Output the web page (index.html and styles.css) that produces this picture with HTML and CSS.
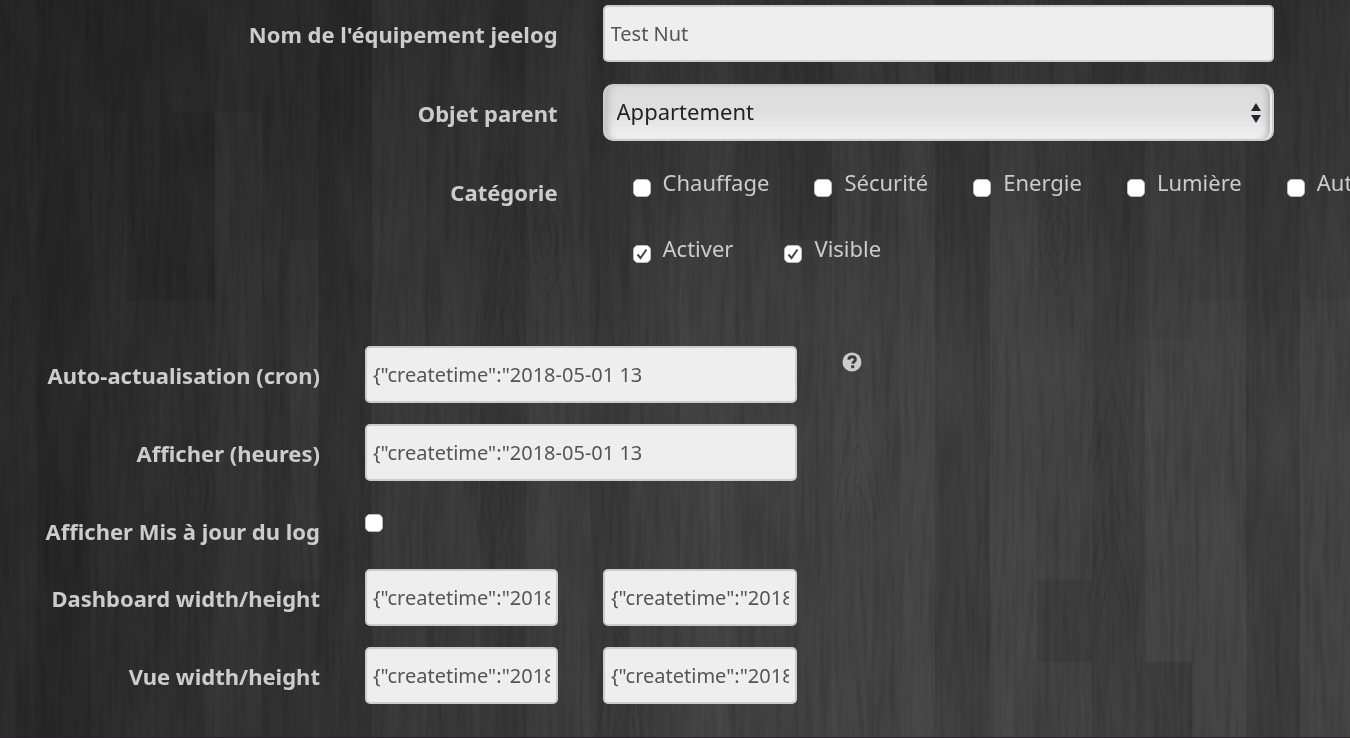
FILE: index.html
```html
<!DOCTYPE html>
<html lang="fr">
<head>
<meta charset="utf-8">
<meta name="viewport" content="width=device-width, initial-scale=1">
<title>Équipement jeelog</title>
<link rel="stylesheet" href="styles.css">
</head>
<body>
<svg class="wood" viewBox="0 0 1350 738" preserveAspectRatio="none" aria-hidden="true">
  <defs>
    <linearGradient id="shade" x1="0" y1="0" x2="1" y2="0">
      <stop offset="0" stop-color="#2a2a2a"/>
      <stop offset=".2" stop-color="#313131"/>
      <stop offset=".4" stop-color="#3d3d3d"/>
      <stop offset=".7" stop-color="#434343"/>
      <stop offset="1" stop-color="#414141"/>
    </linearGradient>
    <linearGradient id="top" x1="0" y1="0" x2="0" y2="1">
      <stop offset="0" stop-color="#222" stop-opacity=".5"/>
      <stop offset=".25" stop-color="#222" stop-opacity=".28"/>
      <stop offset=".5" stop-color="#222" stop-opacity="0"/>
    </linearGradient>
    <filter id="grain" x="0" y="0" width="100%" height="100%">
      <feTurbulence type="fractalNoise" baseFrequency=".2 .012" numOctaves="4" seed="8"/>
      <feColorMatrix values="0 0 0 0 0  0 0 0 0 0  0 0 0 0 0  1.6 0 0 0 -.6"/>
    </filter>
    <filter id="knots" x="0" y="0" width="100%" height="100%">
      <feTurbulence type="fractalNoise" baseFrequency=".03 .006" numOctaves="3" seed="21"/>
      <feColorMatrix values="0 0 0 0 1  0 0 0 0 1  0 0 0 0 1  0 .5 0 0 -.2"/>
    </filter>
    <g id="arches" fill="none" stroke="#111">
      <path d="M-22 110C-16 50-8 30 0 0c8 30 16 50 22 110"/>
      <path d="M-18 120C-12 80-6 60 0 44c6 16 12 36 18 76"/>
      <path d="M-12 128C-8 104-4 96 0 84c4 12 8 20 12 44"/>
    </g>
    <g id="knot" fill="none" stroke="#111">
      <path d="M0-60C26-20 26 20 0 60-26 20-26-20 0-60z"/>
      <path d="M0-40C16-14 16 14 0 40-16 14-16-14 0-40z"/>
      <path d="M0-20C8-7 8 7 0 20-8 7-8-7 0-20z"/>
    </g>
  </defs>
  <rect width="1350" height="738" fill="url(#shade)"/>
  <rect width="1350" height="738" fill="url(#top)"/>
  <g fill="#000" fill-opacity=".07">
    <path d="M37 0h54v738H37zM91 0h80v111H91zM127 111h88v190h-88zM318 0h54v738h-54zM480 0h46v738h-46zM590 0h40v738h-40zM935 0h55v738h-55zM1092 0h53v738h-53zM1246 0h54v738h-54zM780 60h52v180h-52zM1037 580h55v82h-55zM1145 662h47v76h-47z"/>
  </g>
  <g fill="#fff" fill-opacity=".02">
    <path d="M215 111h47v627h-47zM372 0h54v738h-54zM290 240h28v340h-28zM680 0h54v738h-54zM832 140h40v598h-40zM900 0h35v738h-35zM990 0h47v738h-47zM1145 338h47v324h-47zM1192 300h54v438h-54zM1300 424h25v153h-25zM1300 300h50v438h-50z"/>
  </g>
  <g opacity=".14">
    <use href="#arches" x="507" y="140"/>
    <use href="#arches" x="507" y="255"/>
    <use href="#arches" x="1112" y="350"/>
    <use href="#arches" x="1112" y="490"/>
    <use href="#arches" x="858" y="400"/>
    <use href="#arches" x="620" y="630"/>
    <use href="#knot" x="195" y="490"/>
    <use href="#knot" x="495" y="505"/>
    <use href="#knot" x="1058" y="235"/>
    <use href="#knot" x="545" y="240"/>
  </g>
  <rect width="1350" height="738" filter="url(#grain)" opacity=".17"/>
  <rect width="1350" height="738" filter="url(#knots)" opacity=".12"/>
  <rect y="737" width="1350" height="1" fill="#2a2228"/>
</svg>

<form class="page">
  <section class="form form-main">
    <label class="label" for="name">Nom de l'équipement jeelog</label>
    <input class="field" id="name" type="text" value="Test Nut">

    <label class="label" for="parent">Objet parent</label>
    <select class="field select" id="parent"><option>Appartement</option></select>

    <span class="label" id="cat">Catégorie</span>
    <div class="checks checks-category" role="group" aria-labelledby="cat">
      <label class="check"><input class="box" type="checkbox">Chauffage</label>
      <label class="check"><input class="box" type="checkbox">Sécurité</label>
      <label class="check"><input class="box" type="checkbox">Energie</label>
      <label class="check"><input class="box" type="checkbox">Lumière</label>
      <label class="check"><input class="box" type="checkbox">Automatisme</label>
    </div>

    <div class="checks checks-state">
      <label class="check"><input class="box" type="checkbox" checked>Activer</label>
      <label class="check"><input class="box" type="checkbox" checked>Visible</label>
    </div>
  </section>

  <section class="form form-options">
    <label class="label" for="cron">Auto-actualisation (cron)</label>
    <input class="field wide" id="cron" type="text" value='{"createtime":"2018-05-01 13'>
    <button class="help" type="button" aria-label="Aide">
      <svg viewBox="0 0 20 20" width="20" height="20" aria-hidden="true">
        <circle cx="10" cy="10" r="9.5" fill="#ccc"/>
        <path d="M6.7 7.7C6.9 5.6 8.200 4.700 10 4.700c2 0 3.400 1.100 3.400 2.700 0 2.300-2.600 2.200-2.600 4.400" fill="none" stroke="#3c3c3c" stroke-width="2.900"/>
        <path d="M9.200 13.300h3v2.900h-3z" fill="#3c3c3c"/>
      </svg>
    </button>

    <label class="label" for="hours">Afficher (heures)</label>
    <input class="field wide" id="hours" type="text" value='{"createtime":"2018-05-01 13'>

    <label class="label" for="log">Afficher Mis à jour du log</label>
    <div class="single"><input class="box" id="log" type="checkbox"></div>

    <label class="label" for="dash-w">Dashboard width/height</label>
    <input class="field" id="dash-w" type="text" value='{"createtime":"2018-05-01 13'>
    <input class="field" type="text" aria-label="Dashboard height" value='{"createtime":"2018-05-01 13'>

    <label class="label" for="view-w">Vue width/height</label>
    <input class="field" id="view-w" type="text" value='{"createtime":"2018-05-01 13'>
    <input class="field" type="text" aria-label="Vue height" value='{"createtime":"2018-05-01 13'>
  </section>
</form>
</body>
</html>
```

FILE: styles.css
```css
* { box-sizing: border-box; }

body {
  margin: 0;
  min-height: 100vh;
  background: #363636;
  color: #ccc;
  font: 22px/30px "Noto Sans", "Open Sans", sans-serif;
}

.wood {
  position: fixed;
  inset: 0;
  width: 100%;
  height: 100%;
  z-index: -1;
}

.page {
  display: flex;
  flex-direction: column;
  gap: 73px;
  padding-top: 5px;
}

.form {
  display: grid;
  column-gap: 45px;
  row-gap: 22px;
  align-items: start;
}

.form-main {
  grid-template-columns: 41.3vw minmax(0, 1fr);
  padding-right: 76px;
}

.form-options {
  grid-template-columns: 23.7vw 14.3vw 14.4vw minmax(0, 1fr);
  row-gap: 21px;
}

.label {
  grid-column: 1;
  padding-top: 14px;
  text-align: right;
  font-weight: 700;
  white-space: nowrap;
}

.field {
  width: 100%;
  min-width: 0;
  height: 57px;
  padding: 0 6px;
  border: 2px solid #ccc;
  border-radius: 5px;
  background: #eee;
  color: #555;
  font: inherit;
  font-size: 20px;
}

.select {
  appearance: none;
  padding: 0 12px 3px;
  border-radius: 10px;
  color: #222;
  font-size: 22px;
  background:
    url("data:image/svg+xml,%3Csvg xmlns='http://www.w3.org/2000/svg' width='10' height='20'%3E%3Cpath d='M5 0l5 8H0zM5 20l5-8H0z' fill='%2325252c'/%3E%3C/svg%3E") right 11px center no-repeat,
    linear-gradient(#dcdcdc, #dfdfdf 50%, #f2f2f2);
  box-shadow: inset -2px 0 0 #eee, inset -9px 0 7px -5px #aaa, inset 8px 0 7px -5px #bbb;
}

.wide { grid-column: 2 / 4; }

.checks {
  display: flex;
  gap: 45px;
  height: 44px;
  padding: 4px 0 0 30px;
  white-space: nowrap;
}

.checks-category {
  margin-right: -76px;
  overflow: hidden;
}

.checks-state {
  grid-column: 2;
  gap: 51px;
}

.check {
  display: flex;
  gap: 12px;
  flex: none;
}

.box {
  appearance: none;
  flex: none;
  width: 18px;
  height: 18px;
  margin: 12px 0 0;
  border: 1px solid #bbb;
  border-radius: 5px;
  background: #fff;
}

.box:checked {
  background: #fff url("data:image/svg+xml,%3Csvg xmlns='http://www.w3.org/2000/svg' width='16' height='16'%3E%3Cpath d='M3.500 8.500l3 3.500L12.500 3.500' fill='none' stroke='%23444' stroke-width='2'/%3E%3C/svg%3E") center no-repeat;
}

.single {
  grid-column: 2 / 5;
  display: flex;
  height: 46px;
}

.help {
  width: 20px;
  height: 20px;
  margin-top: 6px;
  padding: 0;
  border: 0;
  background: none;
}

.help svg { display: block; }
```
